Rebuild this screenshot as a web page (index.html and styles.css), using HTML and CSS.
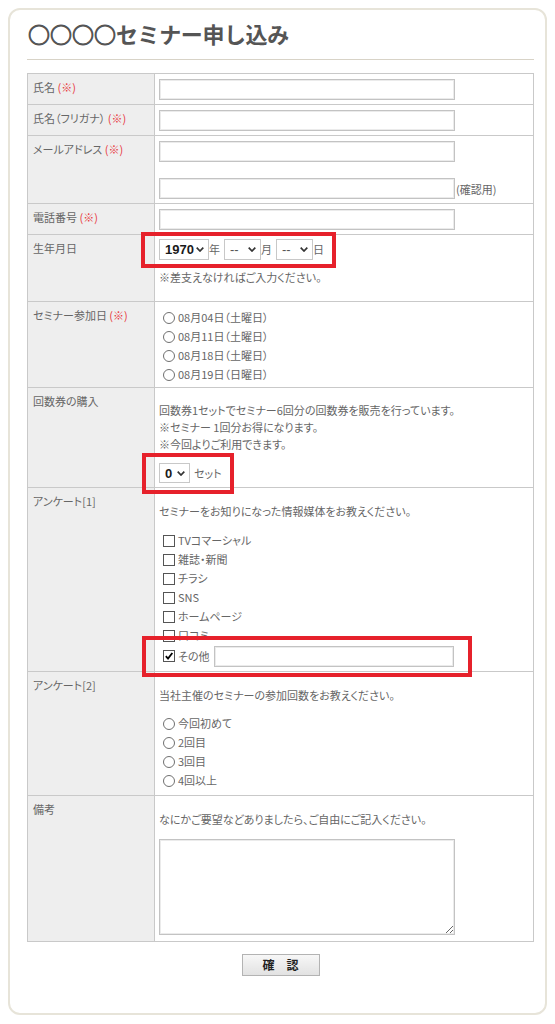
FILE: index.html
```html
<!DOCTYPE html>
<html lang="ja">
<head>
<meta charset="utf-8">
<title>○○○○セミナー申し込み</title>
<link rel="stylesheet" href="styles.css">
</head>
<body>
<div class="card">
  <h1 class="title"><span class="rings">○○○○</span>セミナー申し込み</h1>

  <div class="form">
    <div class="label">氏名 <span class="req">(※)</span></div>
    <div class="field"><input class="text" type="text"></div>

    <div class="label">氏名（フリガナ） <span class="req">(※)</span></div>
    <div class="field"><input class="text" type="text"></div>

    <div class="label">メールアドレス <span class="req">(※)</span></div>
    <div class="field mail">
      <input class="text" type="text">
      <div class="with-note"><input class="text" type="text"><span class="note">(確認用)</span></div>
    </div>

    <div class="label">電話番号 <span class="req">(※)</span></div>
    <div class="field"><input class="text" type="text"></div>

    <div class="label">生年月日</div>
    <div class="field birth">
      <div class="date-row">
        <span class="sel"><select class="sel-year"><option>1970</option></select><svg class="chev" viewBox="0 0 8 5"><path d="M0.7 0.7 L4 4 L7.3 0.7"/></svg></span><span class="unit">年</span>
        <span class="sel"><select class="sel-small"><option>--</option></select><svg class="chev" viewBox="0 0 8 5"><path d="M0.7 0.7 L4 4 L7.3 0.7"/></svg></span><span class="unit">月</span>
        <span class="sel"><select class="sel-small"><option>--</option></select><svg class="chev" viewBox="0 0 8 5"><path d="M0.7 0.7 L4 4 L7.3 0.7"/></svg></span><span class="unit">日</span>
      </div>
      <p class="hint">※差支えなければご入力ください。</p>
    </div>

    <div class="label">セミナー参加日 <span class="req">(※)</span></div>
    <div class="field dates">
      <div class="opt"><span class="radio"></span>08月04日（土曜日）</div>
      <div class="opt"><span class="radio"></span>08月11日（土曜日）</div>
      <div class="opt"><span class="radio"></span>08月18日（土曜日）</div>
      <div class="opt"><span class="radio"></span>08月19日（日曜日）</div>
    </div>

    <div class="label">回数券の購入</div>
    <div class="field ticket">
      <p class="line">回数券1セットでセミナー6回分の回数券を販売を行っています。</p>
      <p class="line">※セミナー 1回分お得になります。</p>
      <p class="line">※今回よりご利用できます。</p>
      <div class="set-row">
        <span class="sel"><select class="sel-count"><option>0</option></select><svg class="chev" viewBox="0 0 8 5"><path d="M0.7 0.7 L4 4 L7.3 0.7"/></svg></span><span class="unit set">セット</span>
      </div>
    </div>

    <div class="label">アンケート[1]</div>
    <div class="field survey">
      <p class="intro">セミナーをお知りになった情報媒体をお教えください。</p>
      <div class="opts">
        <div class="opt"><span class="check"></span>TVコマーシャル</div>
        <div class="opt"><span class="check"></span>雑誌・新聞</div>
        <div class="opt"><span class="check"></span>チラシ</div>
        <div class="opt"><span class="check"></span>SNS</div>
        <div class="opt"><span class="check"></span>ホームページ</div>
        <div class="opt"><span class="check"></span>口コミ</div>
        <div class="opt other"><span class="check"><svg class="tick" viewBox="0 0 12 12"><path d="M2.2 6.2 L4.8 9 L10 2.4"/></svg></span>その他<input class="text other-input" type="text"></div>
      </div>
    </div>

    <div class="label">アンケート[2]</div>
    <div class="field survey2">
      <p class="intro">当社主催のセミナーの参加回数をお教えください。</p>
      <div class="opts">
        <div class="opt"><span class="radio"></span>今回初めて</div>
        <div class="opt"><span class="radio"></span>2回目</div>
        <div class="opt"><span class="radio"></span>3回目</div>
        <div class="opt"><span class="radio"></span>4回以上</div>
      </div>
    </div>

    <div class="label">備考</div>
    <div class="field memo">
      <p class="intro">なにかご要望などありましたら、ご自由にご記入ください。</p>
      <textarea class="area"></textarea>
    </div>
  </div>

  <div class="actions"><button class="btn" type="button">確　認</button></div>

  <div class="mark mark-birth"></div>
  <div class="mark mark-ticket"></div>
  <div class="mark mark-other"></div>
</div>
</body>
</html>
```
FILE: styles.css
```css
html, body {
  background: #fff;
}
body {
  margin: 8px;
  font-family: "Noto Sans CJK JP", "Noto Sans", sans-serif;
  font-size: 11px;
  color: #666;
  font-feature-settings: "palt";
}
p {
  margin: 0;
}

.card {
  position: relative;
  border: 2px solid #e7e4d9;
  border-radius: 12px;
  padding: 0 17px 37px;
}

.title {
  margin: 0;
  width: 507px;
  box-sizing: border-box;
  padding: 12px 0 15px 1px;
  font-size: 22px;
  line-height: 22px;
  font-weight: bold;
  color: #555;
  letter-spacing: -0.4px;
  font-feature-settings: normal;
  border-bottom: 1px solid #d8d3c7;
}
.rings {
  -webkit-text-stroke: 0.9px #555;
  letter-spacing: 0;
}

.form {
  display: grid;
  grid-template-columns: 126px 1fr;
  gap: 1px;
  width: 507px;
  box-sizing: border-box;
  margin-top: 13px;
  background: #c9c9c9;
  border: 1px solid #c9c9c9;
}

.label {
  background: #eeeeee;
  padding: 4px 5px;
  line-height: 18px;
  color: #666;
}
.req {
  color: #e8383d;
}

.field {
  background: #fff;
  padding: 5px 4px 4px;
  line-height: 19px;
}

.text {
  display: block;
  width: 296px;
  height: 21px;
  box-sizing: border-box;
  margin: 0;
  padding: 0 3px;
  border: 1px solid #c3c3c3;
  box-shadow: inset 0 0 0 1px #ebebeb;
  background: #fff;
  font: inherit;
}

.mail {
  display: flex;
  flex-direction: column;
  gap: 16px;
}
.with-note {
  display: flex;
  align-items: flex-end;
  height: 21px;
}
.note {
  margin-left: 1px;
  line-height: 19px;
}

/* birthday */
.birth {
  padding: 4px 4px 15px;
}
.date-row,
.set-row {
  display: flex;
  align-items: center;
  height: 21px;
}
.sel {
  position: relative;
  display: block;
}
.sel select {
  display: block;
  appearance: none;
  -webkit-appearance: none;
  height: 21px;
  margin: 0;
  padding: 0 0 0 5px;
  box-sizing: border-box;
  border: 1px solid #c8c8c8;
  border-radius: 0;
  background: #fff;
  font-family: "Liberation Sans", Arial, sans-serif;
  font-size: 13px;
  color: #555;
}
.sel-year {
  width: 50px;
  font-weight: bold;
  color: #1a1a1a !important;
}
.sel-small {
  width: 37px;
}
.sel-count {
  width: 31px;
  font-weight: bold;
  color: #1a1a1a !important;
}
.chev {
  position: absolute;
  right: 5px;
  top: 8px;
  width: 8px;
  height: 5px;
  pointer-events: none;
}
.chev path {
  fill: none;
  stroke: #333;
  stroke-width: 1.7;
}
.unit {
  margin-right: 4px;
  line-height: 21px;
}
.unit.set {
  margin-left: 4px;
}
.hint {
  margin-top: 8px;
  line-height: 18px;
}

/* options */
.opt {
  display: flex;
  align-items: center;
  height: 19px;
  white-space: nowrap;
}
.radio {
  flex: none;
  width: 12px;
  height: 12px;
  box-sizing: border-box;
  margin: 0 3px 0 4px;
  border: 1px solid #707070;
  border-radius: 50%;
  background: #fff;
}
.check {
  flex: none;
  display: flex;
  width: 12px;
  height: 12px;
  box-sizing: border-box;
  margin: 0 3px 0 4px;
  border: 1px solid #555;
  background: #fff;
}
.tick {
  width: 10px;
  height: 10px;
}
.tick path {
  fill: none;
  stroke: #000;
  stroke-width: 2.2;
}

.dates {
  padding: 6px 4px 3px;
}

.ticket {
  padding: 14px 4px 4px;
}
.line {
  line-height: 17px;
}
.set-row {
  margin-top: 10px;
  height: 20px;
}
.set-row .sel select {
  height: 20px;
}
.set-row .chev {
  top: 8px;
}

.survey {
  padding: 14px 4px 4px;
}
.intro {
  line-height: 19px;
}
.opts {
  margin-top: 10px;
}
.opt.other {
  height: 22px;
}
.other-input {
  width: 240px;
  margin-left: 4px;
}

.survey2 {
  padding: 14px 4px 5px;
}
.survey2 .opts {
  margin-top: 9px;
}

.memo {
  padding: 14px 4px 6px;
}
.area {
  display: block;
  width: 296px;
  height: 96px;
  box-sizing: border-box;
  margin: 10px 0 0;
  border: 1px solid #c3c3c3;
  box-shadow: inset 0 0 0 1px #ebebeb;
  font: inherit;
}

.actions {
  display: flex;
  justify-content: center;
  width: 507px;
  margin-top: 12px;
}
.btn {
  width: 78px;
  height: 22px;
  padding: 0;
  border: 1px solid #b3b3b3;
  border-radius: 0;
  background: linear-gradient(#f7f7f7, #e2e2e2);
  font-family: "Noto Sans CJK JP", sans-serif;
  font-size: 12px;
  font-weight: bold;
  line-height: 20px;
  color: #222;
}

/* red annotation frames over the form */
.mark {
  position: absolute;
  box-sizing: border-box;
  border: 4px solid #e6212b;
  pointer-events: none;
}
.mark-birth {
  left: 131px;
  top: 222px;
  width: 195px;
  height: 36px;
}
.mark-ticket {
  left: 132px;
  top: 443px;
  width: 92px;
  height: 41px;
}
.mark-other {
  left: 132px;
  top: 626px;
  width: 330px;
  height: 41px;
}
```
